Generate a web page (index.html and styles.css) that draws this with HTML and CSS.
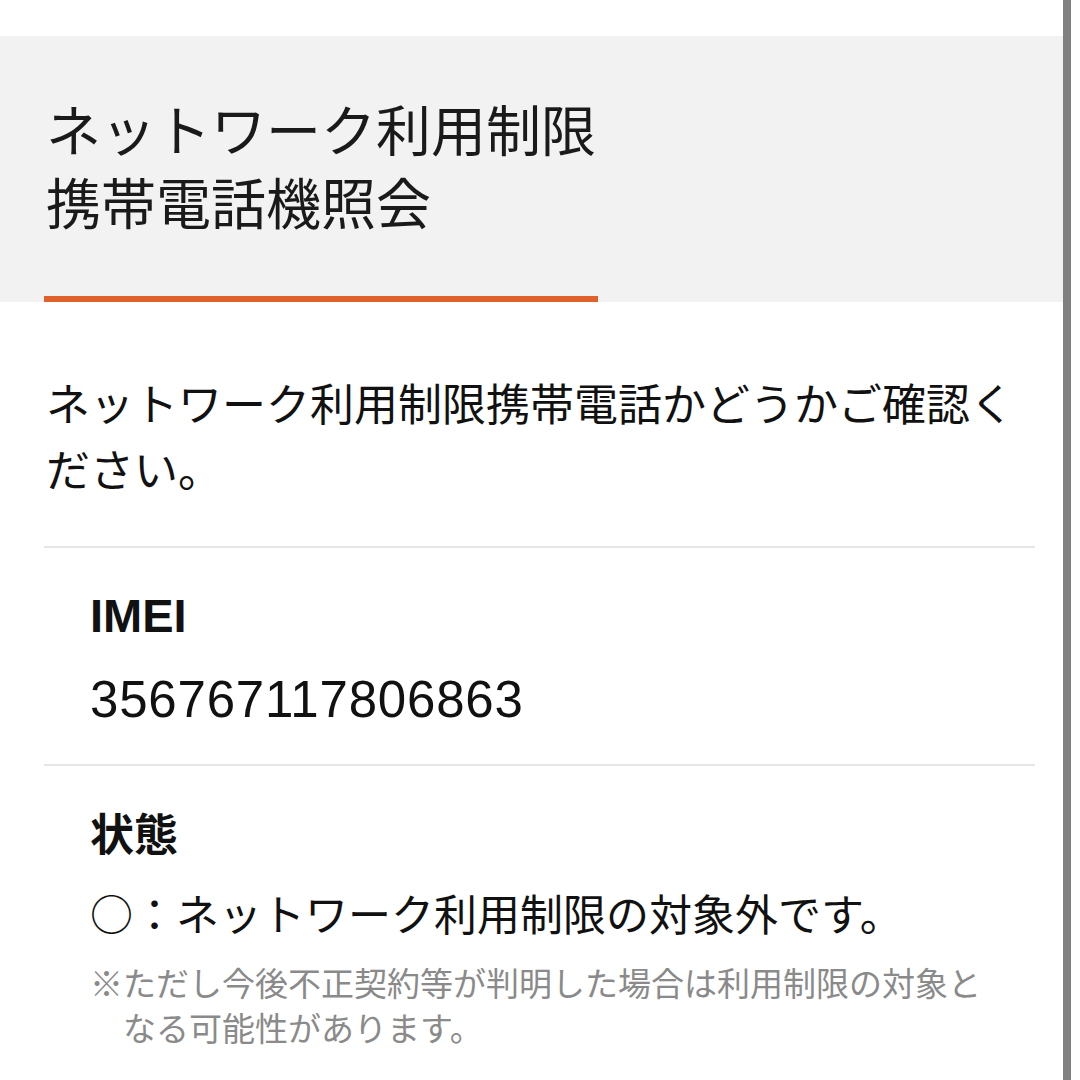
FILE: index.html
```html
<!DOCTYPE html>
<html lang="ja">
<head>
<meta charset="utf-8">
<title>ネットワーク利用制限携帯電話機照会</title>
<link rel="stylesheet" href="styles.css">
</head>
<body>
<div class="page">
  <main class="main">
    <div class="topband"></div>
    <header class="hero">
      <h1 class="title">ネットワーク利用制限<br>携帯電話機照会</h1>
      <div class="accent"></div>
    </header>
    <section class="content">
      <p class="lead">ネットワーク利用制限携帯電話かどうかご確認ください。</p>
      <div class="item item-imei">
        <h2 class="label latin">IMEI</h2>
        <p class="value latin">356767117806863</p>
      </div>
      <div class="item item-status">
        <h2 class="label">状態</h2>
        <p class="status">○：ネットワーク利用制限の対象外です。</p>
        <p class="note">※ただし今後不正契約等が判明した場合は利用制限の対象となる可能性があります。</p>
      </div>
    </section>
  </main>
  <div class="rail"><div class="thumb"></div></div>
</div>
</body>
</html>
```

FILE: styles.css
```css
html, body {
  margin: 0;
  padding: 0;
  background: #ffffff;
}

body {
  font-family: "Noto Sans CJK JP", "Noto Sans", sans-serif;
  color: #111111;
}

.page {
  display: flex;
  width: 1080px;
  height: 1080px;
  overflow: hidden;
}

.main {
  flex: none;
  width: 1063px;
  display: flex;
  flex-direction: column;
}

.topband {
  height: 36px;
  background: #ffffff;
}

.hero {
  height: 266px;
  box-sizing: border-box;
  background: #f2f2f2;
  padding-top: 55px;
  display: flex;
  flex-direction: column;
}

.title {
  margin: 0;
  padding-left: 46px;
  font-size: 55px;
  line-height: 73px;
  font-weight: 400;
  color: #1a1a1a;
}

.accent {
  margin-top: auto;
  margin-left: 44px;
  width: 554px;
  height: 6px;
  background: #e0612b;
}

.content {
  padding: 0 28px 0 44px;
}

.lead {
  margin: 67px 0 45px;
  padding-left: 2px;
  font-size: 44px;
  line-height: 66px;
  color: #111111;
}

.item {
  border-top: 2px solid #e6e6e6;
  padding-left: 46px;
}

.item-imei {
  padding-bottom: 35px;
}

.latin {
  font-family: "Liberation Sans", "Noto Sans CJK JP", sans-serif;
}

.label {
  margin: 0;
  font-weight: 700;
  color: #111111;
}

.item-imei .label {
  margin-top: 41px;
  font-size: 47px;
  line-height: 54px;
}

.value {
  margin: 27px 0 0;
  font-size: 51px;
  line-height: 59px;
  letter-spacing: 0.8px;
  color: #111111;
}

.item-status .label {
  margin-top: 36px;
  font-size: 44px;
  line-height: 60px;
}

.status {
  margin: 20px 0 0;
  font-size: 43px;
  line-height: 60px;
  color: #111111;
}

.note {
  margin: 18px 0 0;
  padding-left: 33px;
  padding-right: 30px;
  text-indent: -33px;
  font-size: 33px;
  line-height: 45px;
  color: #8a8a8a;
}

.rail {
  flex: none;
  width: 17px;
  display: flex;
  background: #ffffff;
}

.thumb {
  width: 8px;
  background: #808080;
}
```
